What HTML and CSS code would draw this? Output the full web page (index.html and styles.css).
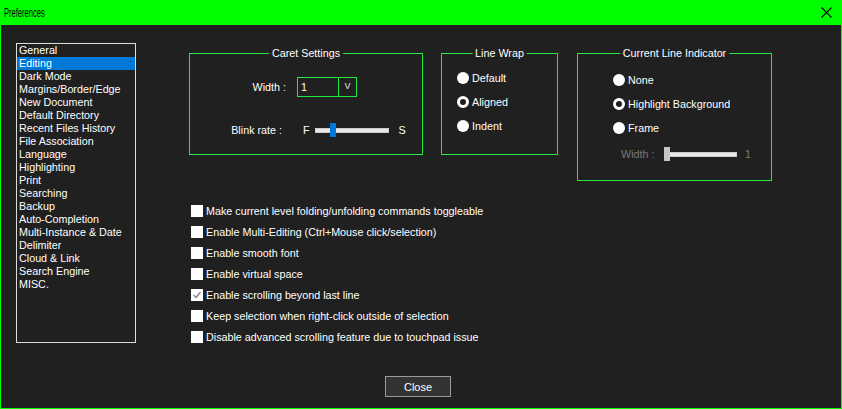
FILE: index.html
```html
<!DOCTYPE html>
<html>
<head>
<meta charset="utf-8">
<title>Preferences</title>
<link rel="stylesheet" href="styles.css">
</head>
<body>
<div class="window">
  <div class="titlebar">
    <span class="title">Preferences</span>
    <svg class="close-x" width="11" height="11" viewBox="0 0 11 11"><path d="M0.5 0.5 L10.5 10.5 M10.5 0.5 L0.5 10.5" stroke="#000" stroke-width="1.1" fill="none"/></svg>
  </div>
  <div class="content">
    <div class="top">
      <ul class="nav">
        <li>General</li>
        <li class="sel">Editing</li>
        <li>Dark Mode</li>
        <li>Margins/Border/Edge</li>
        <li>New Document</li>
        <li>Default Directory</li>
        <li>Recent Files History</li>
        <li>File Association</li>
        <li>Language</li>
        <li>Highlighting</li>
        <li>Print</li>
        <li>Searching</li>
        <li>Backup</li>
        <li>Auto-Completion</li>
        <li>Multi-Instance &amp; Date</li>
        <li>Delimiter</li>
        <li>Cloud &amp; Link</li>
        <li>Search Engine</li>
        <li>MISC.</li>
      </ul>
      <div class="main">
        <div class="groups">
          <div class="group caret">
            <div class="group-title">Caret Settings</div>
            <div class="caret-row">
              <span class="lbl">Width :</span>
              <div class="combo"><span class="combo-val">1</span><span class="combo-btn">v</span></div>
            </div>
            <div class="caret-row blink">
              <span class="lbl">Blink rate :</span>
              <div class="slider-wrap">
                <span class="end-f">F</span>
                <div class="track blink-track"><div class="thumb blue"></div></div>
                <span class="end-s">S</span>
              </div>
            </div>
          </div>
          <div class="group wrap">
            <div class="group-title">Line Wrap</div>
            <div class="radio-row"><span class="radio"></span><span>Default</span></div>
            <div class="radio-row"><span class="radio on"></span><span>Aligned</span></div>
            <div class="radio-row"><span class="radio"></span><span>Indent</span></div>
          </div>
          <div class="group cli">
            <div class="group-title">Current Line Indicator</div>
            <div class="radio-row"><span class="radio"></span><span>None</span></div>
            <div class="radio-row"><span class="radio on"></span><span>Highlight Background</span></div>
            <div class="radio-row"><span class="radio"></span><span>Frame</span></div>
            <div class="width-row">
              <span class="dis-lbl">Width :</span>
              <div class="track cli-track"><div class="thumb grey"></div></div>
              <span class="dis-val">1</span>
            </div>
          </div>
        </div>
        <div class="checks">
          <div class="check"><span class="box"></span><span>Make current level folding/unfolding commands toggleable</span></div>
          <div class="check"><span class="box"></span><span>Enable Multi-Editing (Ctrl+Mouse click/selection)</span></div>
          <div class="check"><span class="box"></span><span>Enable smooth font</span></div>
          <div class="check"><span class="box"></span><span>Enable virtual space</span></div>
          <div class="check"><span class="box checked"><svg width="12" height="12" viewBox="0 0 12 12"><path d="M2.5 6 L5 8.5 L9.5 3" stroke="#808080" stroke-width="1.3" fill="none"/></svg></span><span>Enable scrolling beyond last line</span></div>
          <div class="check"><span class="box"></span><span>Keep selection when right-click outside of selection</span></div>
          <div class="check"><span class="box"></span><span>Disable advanced scrolling feature due to touchpad issue</span></div>
        </div>
      </div>
    </div>
    <div class="footer">
      <button class="btn">Close</button>
    </div>
  </div>
</div>
</body>
</html>
```

FILE: styles.css
```css
* { box-sizing: border-box; }
html, body { margin: 0; padding: 0; background: #202020; }
body {
  font-family: "Liberation Sans", Arial, sans-serif;
  font-size: 10.75px;
  color: #fff;
}
.window {
  width: 842px;
  height: 409px;
  border: 1px solid #00ff00;
  border-top: none;
  background: #202020;
  display: flex;
  flex-direction: column;
}
.titlebar {
  height: 25px;
  flex: none;
  background: #00ff00;
  display: flex;
  align-items: center;
  justify-content: space-between;
  padding: 0 9px 0 3px;
}
.title {
  color: #000;
  font-size: 13px;
  display: inline-block;
  transform: scaleX(0.58);
  transform-origin: left center;
}
.close-x { display: block; }
.content { flex: 1; display: flex; flex-direction: column; }
.top { display: flex; align-items: flex-start; }
.nav {
  list-style: none;
  margin: 18px 0 0 15px;
  padding: 0;
  width: 120px;
  height: 300px;
  border: 1px solid #dcdcdc;
  flex: none;
}
.nav li {
  height: 13px;
  line-height: 13px;
  padding-left: 2px;
  white-space: nowrap;
}
.nav li.sel { background: #0078d7; }
.main { margin: 28px 0 0 53px; }
.groups { display: flex; align-items: flex-start; }
.group {
  position: relative;
  border: 1px solid #20e840;
}
.group-title {
  position: absolute;
  top: -7px;
  left: 50%;
  transform: translateX(-50%);
  background: #202020;
  padding: 0 3px;
  line-height: 13px;
  white-space: nowrap;
}
.caret { width: 234px; height: 102px; padding-top: 23px; }
.caret-row { display: flex; align-items: center; height: 20px; }
.caret-row .lbl { width: 96px; text-align: right; flex: none; }
.caret-row.blink { margin-top: 26px; height: 14px; }
.caret-row.blink .lbl { padding-right: 4px; }
.combo {
  display: flex;
  width: 60px;
  height: 20px;
  margin-left: 11px;
  border: 1px solid #20e840;
}
.combo-val {
  flex: 1;
  padding-left: 3px;
  line-height: 18px;
  border-right: 1px solid #20e840;
}
.combo-btn {
  width: 17px;
  text-align: center;
  line-height: 17px;
  color: #d0d0d0;
  font-family: "Liberation Mono", monospace;
  font-size: 11px;
}
.slider-wrap {
  display: flex;
  align-items: center;
  margin-left: 11px;
  padding-left: 6px;
  height: 14px;
}
.track {
  position: relative;
  height: 5px;
  background: #e8e8e8;
  border: 1px solid #cdcdcd;
}
.blink-track { width: 74px; margin-left: 5px; }
.end-s { margin-left: 10px; }
.thumb {
  position: absolute;
  top: -6px;
  height: 14px;
}
.thumb.blue { left: 14px; width: 6px; background: #0078d7; }
.thumb.grey { left: -1px; width: 6px; background: #c6c6c6; }
.wrap { width: 117px; height: 102px; margin-left: 18px; padding: 12px 0 0 15px; }
.cli { width: 195px; height: 128px; margin-left: 19px; padding: 14px 0 0 35px; }
.radio-row { display: flex; align-items: center; height: 24px; white-space: nowrap; }
.radio {
  width: 12px;
  height: 12px;
  border-radius: 50%;
  background: #fff;
  margin-right: 3px;
  flex: none;
}
.radio.on { background: #202020; border: 3px solid #fff; }
.width-row {
  display: flex;
  align-items: center;
  height: 14px;
  margin: 7px 0 0 8px;
}
.dis-lbl { width: 43px; color: #7a7a7a; flex: none; }
.cli-track { width: 73px; }
.dis-val { margin-left: 8px; color: #7a7a7a; }
.checks { margin: 19px 0 0 2px; }
.check { display: flex; align-items: center; height: 21px; white-space: nowrap; }
.box {
  width: 12px;
  height: 12px;
  background: #fff;
  margin-right: 3px;
  flex: none;
}
.box svg { display: block; }
.footer {
  display: flex;
  justify-content: center;
  padding-right: 6px;
  margin-top: 29px;
}
.btn {
  width: 66px;
  height: 21px;
  padding: 0;
  background: #333;
  border: 1px solid #9b9b9b;
  color: #fff;
  font-family: "Liberation Sans", Arial, sans-serif;
  font-size: 11px;
}
```
